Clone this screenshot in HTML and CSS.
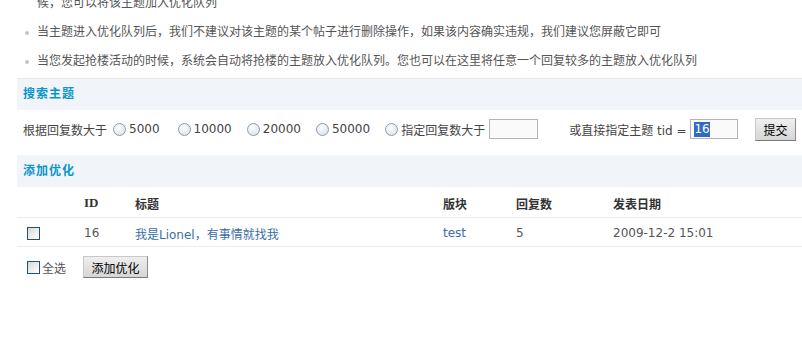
FILE: index.html
```html
<!DOCTYPE html>
<html lang="zh-CN">
<head>
  <meta charset="UTF-8" />
  <meta name="viewport" content="width=device-width, initial-scale=1" />
  <title>主题优化</title>
  <link rel="stylesheet" href="styles.css">
</head>
<body>

<ul class="tips">
  <li class="cont">候，您可以将该主题加入优化队列</li>
  <li>当主题进入优化队列后，我们不建议对该主题的某个帖子进行删除操作，如果该内容确实违规，我们建议您屏蔽它即可</li>
  <li>当您发起抢楼活动的时候，系统会自动将抢楼的主题放入优化队列。您也可以在这里将任意一个回复较多的主题放入优化队列</li>
</ul>

<form class="panel search" id="search-form">
  <h3 class="panel-title">搜索主题</h3>
  <div class="search-row">
    <span class="lead">根据回复数大于</span>
    <label class="opt first"><input type="radio" name="replies" value="5000">5000</label>
    <label class="opt"><input type="radio" name="replies" value="10000">10000</label>
    <label class="opt"><input type="radio" name="replies" value="20000">20000</label>
    <label class="opt"><input type="radio" name="replies" value="50000">50000</label>
    <label class="opt last"><input type="radio" name="replies" value="custom">指定回复数大于</label>
    <input type="text" class="field" id="minReplies">
    <span class="lead tid">或直接指定主题 tid =</span>
    <span class="field tid-field"><span class="sel">16</span></span>
    <button type="submit" class="btn submit">提交</button>
  </div>
</form>

<form class="panel" id="add-form">
  <h3 class="panel-title tall">添加优化</h3>
  <table class="list">
    <colgroup>
      <col class="c-chk">
      <col class="c-id">
      <col class="c-title">
      <col class="c-forum">
      <col class="c-replies">
      <col>
    </colgroup>
    <tr>
      <th></th>
      <th class="latin">ID</th>
      <th>标题</th>
      <th>版块</th>
      <th>回复数</th>
      <th>发表日期</th>
    </tr>
    <tr>
      <td><input type="checkbox" name="tid" value="16"></td>
      <td>16</td>
      <td><a href="#">我是Lionel，有事情就找我</a></td>
      <td><a href="#">test</a></td>
      <td>5</td>
      <td>2009-12-2 15:01</td>
    </tr>
  </table>
  <div class="foot">
    <label class="chk"><input type="checkbox" id="chkall">全选</label>
    <button type="submit" class="btn add">添加优化</button>
  </div>
</form>

</body>
</html>
```

FILE: styles.css
```css
body {
  margin: 0;
  padding-left: 17px;
  font: 12px "DejaVu Sans", "Noto Sans CJK SC", sans-serif;
  color: #444;
  background: #fff;
  overflow: hidden;
}
a {
  color: #3a6ea5;
  text-decoration: none;
}
.tips {
  list-style: none;
  margin: -12px 0 3px;
  padding: 0;
  color: #555;
}
.tips li {
  line-height: 18px;
  padding: 6px 0 5px 20px;
  white-space: nowrap;
}
.tips li::before {
  content: "";
  display: inline-block;
  width: 4px;
  height: 4px;
  border-radius: 50%;
  background: #c4c4c4;
  margin: 0 8px 0 -12px;
  vertical-align: middle;
}
.tips .cont::before {
  visibility: hidden;
}
.panel {
  margin: 0;
}
.search {
  border-top: 1px solid #e8e8e8;
}
.panel-title {
  margin: 0;
  height: 31px;
  line-height: 31px;
  padding-left: 6px;
  background: #f1f5fa;
  color: #0a96c8;
  font-size: 12px;
  letter-spacing: 1px;
}
.panel-title.tall {
  height: 32px;
  line-height: 32px;
}
.search-row {
  display: flex;
  align-items: center;
  height: 20px;
  padding: 9px 6px 16px;
  white-space: nowrap;
}
.lead {
  margin-right: 6px;
}
.opt {
  display: flex;
  align-items: center;
  margin-right: 15px;
}
.opt.first {
  margin-right: 18px;
}
.opt.last {
  margin-right: 4px;
}
.opt input {
  appearance: none;
  box-sizing: border-box;
  width: 13px;
  height: 13px;
  margin: 0 3px 0 0;
  border: 1px solid #8a9cb2;
  border-radius: 50%;
  background: radial-gradient(circle at 40% 35%, #fff, #d3dbe4);
}
.field {
  box-sizing: border-box;
  width: 49px;
  height: 20px;
  margin: 0;
  border: 1px solid #b4b4b4;
  background: #fafafa;
  font: inherit;
}
.tid {
  margin: 0 4px 0 31px;
}
.tid-field {
  display: flex;
  align-items: center;
  padding-left: 3px;
}
.sel {
  background: #316ac5;
  color: #fff;
  line-height: 15px;
}
.btn {
  box-sizing: border-box;
  padding: 0;
  font: inherit;
  color: #000;
  background: linear-gradient(#efefef, #d6d6d6);
  border: 1px solid;
  border-color: #c8c8c8 #8a8a8a #7a7a7a #c8c8c8;
  cursor: pointer;
}
.submit {
  width: 42px;
  height: 23px;
  margin-left: 17px;
}
.list {
  width: 100%;
  border-collapse: collapse;
  table-layout: fixed;
}
.c-chk { width: 61px; }
.c-id { width: 51px; }
.c-title { width: 308px; }
.c-forum { width: 73px; }
.c-replies { width: 97px; }
.list th, .list td {
  padding: 2px 6px 0;
  text-align: left;
  white-space: nowrap;
  border-bottom: 1px solid #ececec;
}
.list th {
  height: 28px;
  font-weight: bold;
  color: #333;
}
.list th.latin {
  font-family: "Liberation Serif", serif;
  font-size: 13px;
}
.list td {
  height: 26px;
  color: #555;
}
input[type="checkbox"] {
  appearance: none;
  box-sizing: border-box;
  width: 13px;
  height: 13px;
  margin: 0 0 0 4px;
  border: 1px solid #1c5180;
  background: linear-gradient(135deg, #d8d8d2, #fff);
  vertical-align: middle;
}
.foot {
  display: flex;
  align-items: center;
  padding: 9px 6px;
}
.chk {
  display: flex;
  align-items: center;
  color: #555;
}
.chk input {
  margin-right: 2px;
}
.add {
  width: 65px;
  height: 22px;
  margin-left: 17px;
}
```
